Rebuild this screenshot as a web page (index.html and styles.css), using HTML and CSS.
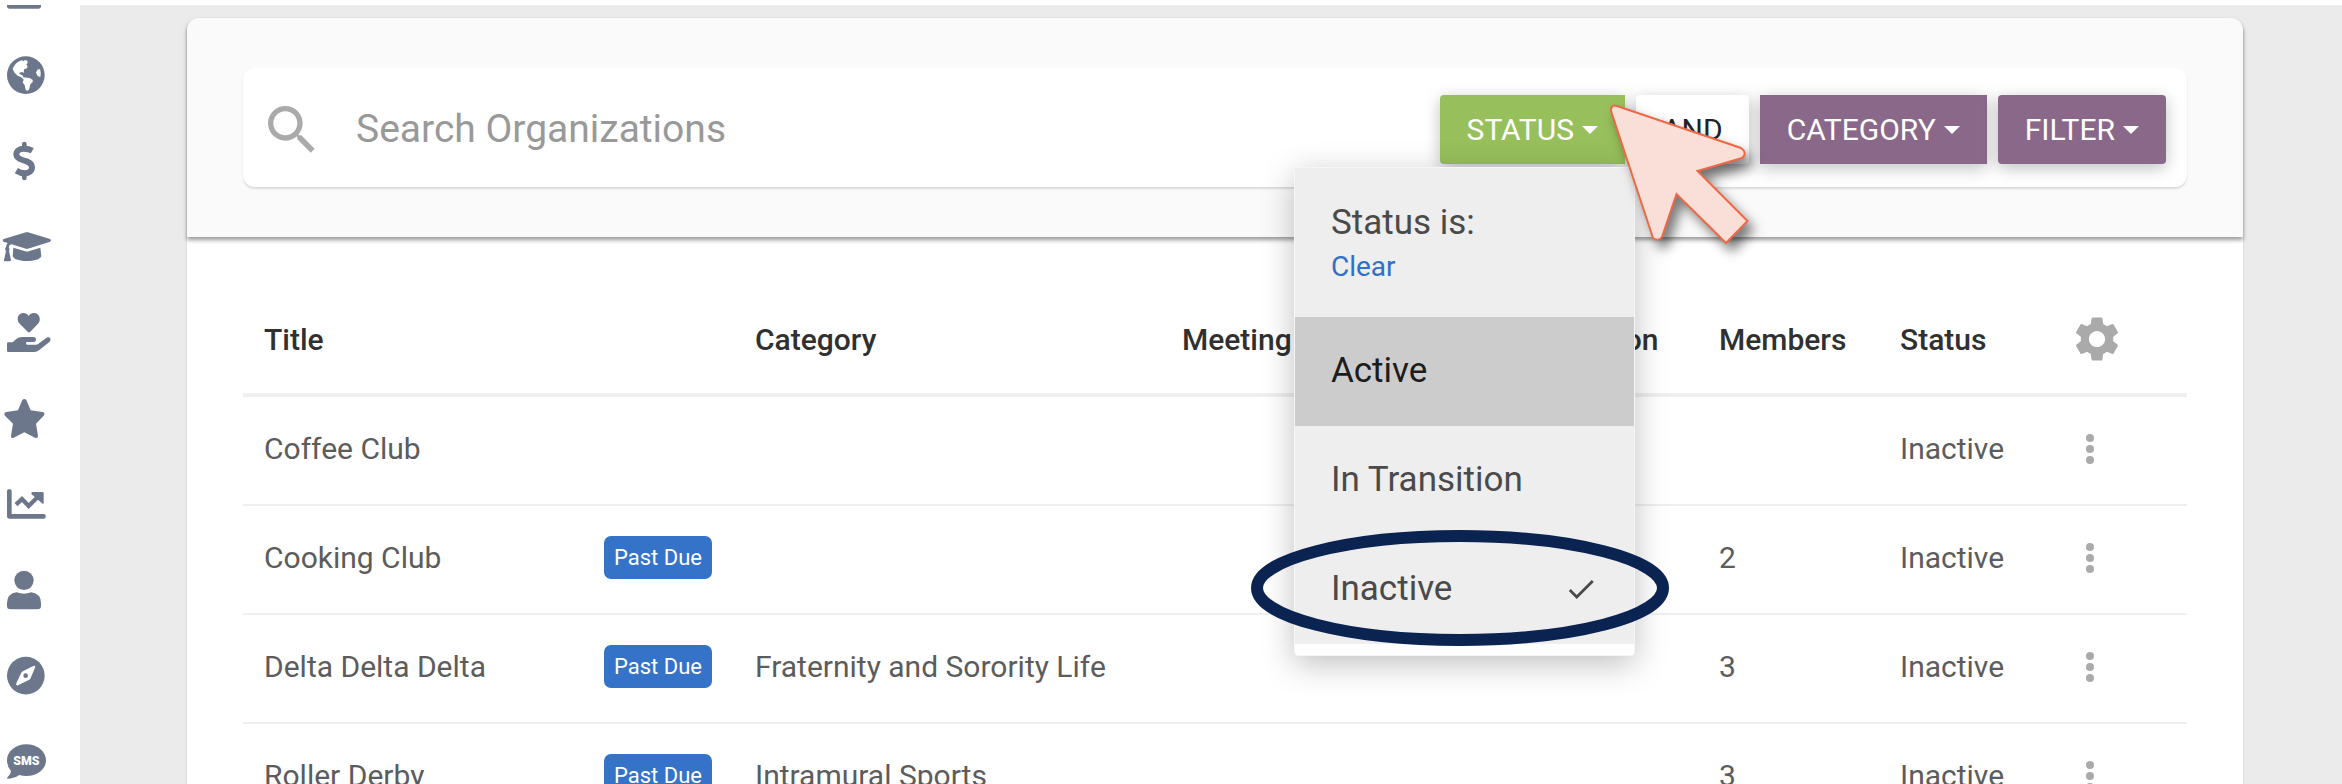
FILE: index.html
```html
<!DOCTYPE html>
<html lang="en">
<head>
<meta charset="utf-8">
<title>Organizations</title>
<link rel="stylesheet" href="styles.css">
</head>
<body>
<div class="page">
  <nav class="sidebar" aria-label="Main">
    <a class="nav-item nav-item-first" href="#" aria-label="Dashboard"><svg class="nav-icon-cut" viewBox="0 15 162 81"><path d="M21 0H123V18Q123 26 115 26H29Q21 26 21 18Z"/></svg></a>
    <a class="nav-item" href="#" aria-label="Network"><svg class="nav-icon" viewBox="0 96 162 258"><circle cx="77.500" cy="225.500" r="56.500"/><path class="cut" d="M38 207C43 194 53 184 66 181L70 184 75 180 82 182 83 189 79 193 83 200 79 206 73 207 71 214 73 218 65 216 57 219 60 223 67 226 70 232 82 233 89 234 98 240 98 246 91 253 87 269 83 272 77 270 74 256 68 247 71 239 64 232 53 227 44 219Z"/><path class="cut" d="M120 207L112 209 108 218 113 228 121 231Q124 219 120 207Z"/></svg></a>
    <a class="nav-item" href="#" aria-label="Finance"><svg class="nav-icon" viewBox="0 354 162 258"><path class="line" d="M73 432V446M73 520V534" stroke-width="14" stroke-linecap="round"/><path class="line" stroke-width="18" d="M97 452C88 447 80 446 71 446C58 446 49 453 49 463C49 473 57 477 67 480L80 484C91 488 96 493 96 502C96 513 87 520 74 520C65 520 57 517 49 512"/></svg></a>
    <a class="nav-item" href="#" aria-label="Academics"><svg class="nav-icon" viewBox="0 612 162 258"><path d="M78 697Q81 696 84 697L150 717Q156 721 150 725L84 746Q81 747 78 746L35 733Q28 734 26 741Q30 747 27 753L33 780Q33 784 29 784H15Q11 784 12 780L18 753Q13 747 18 741Q19 734 23 729L11 725Q5 721 11 717Z"/><path d="M40 743L76 754Q81 755 86 754L121 743L124 769C118 788 44 788 38 769Z"/></svg></a>
    <a class="nav-item" href="#" aria-label="Service"><svg class="nav-icon" viewBox="0 870 162 258"><path d="M86 948C79 937 66 937 57 945C51 952 52 964 59 971L83 995Q87 999 91 995L114 971C121 964 121 952 115 945C106 937 93 937 86 948Z"/><path d="M25 1027H38L48 1018Q56 1011 66 1011H101C111 1012 110 1026 101 1026H81C77 1027 77 1033 81 1034H108Q112 1034 115 1031L140 1013C148 1009 156 1017 149 1025L118 1050Q111 1056 103 1056H25Q21 1056 21 1052V1031Q21 1027 25 1027Z"/></svg></a>
    <a class="nav-item" href="#" aria-label="Favorites"><svg class="nav-icon" viewBox="0 -42 162 258"><path d="M67 30Q73 24 79 30L92 61L127 66Q138 68 131 77L108 101L114 137Q114 146 105 143L73 127L41 143Q32 146 33 137L39 101L15 77Q9 68 19 66L54 61Z"/></svg></a>
    <a class="nav-item" href="#" aria-label="Reports"><svg class="nav-icon" viewBox="0 216 162 258"><path d="M21 303Q21 298 26 298H30Q35 298 35 303V372H132Q137 372 137 377V381Q137 386 132 386H29Q21 386 21 378Z"/><path class="line" stroke-width="13" d="M48 344L66 327L86 348L114 320"/><path d="M98 306H127Q131 306 131 310V338Q131 344 126 340L95 313Q92 307 98 306Z"/></svg></a>
    <a class="nav-item" href="#" aria-label="People"><svg class="nav-icon" viewBox="0 474 162 258"><circle cx="72" cy="571" r="29"/><path d="M50 607Q72 615 94 607Q123 611 123 640V648Q123 658 113 658H31Q21 658 21 648V640Q22 610 50 607Z"/></svg></a>
    <a class="nav-item" href="#" aria-label="Explore"><svg class="nav-icon" viewBox="0 732 162 258"><circle cx="77.500" cy="857" r="56.500"/><path class="cut" d="M100 828Q108 825 105 833L92 864Q90 869 85 871L54 886Q46 888 49 880L63 850Q65 845 70 843Z"/><circle cx="77" cy="857" r="7"/></svg></a>
    <a class="nav-item" href="#" aria-label="Text messages"><svg class="nav-icon" viewBox="0 990 162 258"><path d="M79 1063C112 1063 138 1084 138 1111C138 1138 112 1158 79 1158Q68 1158 58 1155C46 1163 34 1166 23 1166Q20 1164 23 1161Q33 1152 33 1143Q21 1130 21 1111C21 1084 47 1063 79 1063Z"/><text class="sms" x="79" y="1125" text-anchor="middle">SMS</text></svg></a>
  </nav>
  <main class="content">
    <section class="card">
      <header class="card-header">
        <div class="search">
          <svg class="search-icon" viewBox="0 0 24 24"><path d="M15.500 14h-.79l-.28-.27C15.410 12.590 16 11.110 16 9.500 16 5.910 13.090 3 9.500 3S3 5.910 3 9.500 5.910 16 9.500 16c1.610 0 3.090-.59 4.230-1.570l.27.28v.79l5 4.990L20.490 19l-4.990-5zm-6 0C7.010 14 5 11.990 5 9.500S7.010 5 9.500 5 14 7.010 14 9.500 11.990 14 9.500 14z"/></svg>
          <input class="search-input" type="text" placeholder="Search Organizations" aria-label="Search Organizations">
          <div class="filters">
            <div class="dropdown">
              <button class="btn btn-green" type="button" aria-expanded="true">STATUS<span class="caret"></span></button>
              <div class="menu">
                <div class="menu-head">
                  <div>Status is:</div>
                  <a class="clear" href="#">Clear</a>
                </div>
                <button class="menu-item menu-item-active" type="button">Active</button>
                <button class="menu-item" type="button">In Transition</button>
                <button class="menu-item" type="button">Inactive<svg class="check" viewBox="0 0 24 24"><path d="M9 16.200L4.800 12l-1.400 1.400L9 19 21 7l-1.400-1.400z"/></svg></button>
                <svg class="ring" viewBox="0 0 418 116"><ellipse cx="209" cy="58" rx="203" ry="52"/></svg>
              </div>
              <svg class="pointer" viewBox="1605 94 165 165"><path d="M1618 105L1742 147Q1749 152 1743 157L1698.500 170L1748.500 220L1727 242L1677.500 193L1663 236Q1659 241 1654 237L1612 110Q1612 103 1618 105Z"/></svg>
            </div>
            <button class="btn btn-white" type="button">AND</button>
            <button class="btn btn-purple btn-square" type="button">CATEGORY<span class="caret"></span></button>
            <button class="btn btn-purple" type="button">FILTER<span class="caret"></span></button>
          </div>
        </div>
      </header>
      <div class="card-body">
        <table class="table">
          <colgroup>
            <col><col class="col-badge"><col class="col-category"><col class="col-meeting"><col class="col-location"><col class="col-members"><col class="col-status"><col class="col-actions">
          </colgroup>
          <thead>
            <tr><th>Title</th><th></th><th>Category</th><th>Meeting</th><th>Location</th><th>Members</th><th>Status</th>
              <th><button class="icon-btn" type="button" aria-label="Settings"><svg class="gear" viewBox="0 0 24 24"><path d="M19.140 12.940c.04-.3.060-.61.060-.94 0-.32-.02-.64-.07-.94l2.030-1.580c.18-.14.230-.41.120-.61l-1.920-3.320c-.12-.22-.37-.29-.59-.22l-2.390.96c-.5-.38-1.030-.7-1.620-.94l-.36-2.540c-.04-.24-.24-.41-.48-.41h-3.840c-.24 0-.43.170-.47.410l-.36 2.540c-.59.240-1.130.570-1.620.940l-2.390-.96c-.22-.08-.47 0-.59.220L2.740 8.870c-.12.210-.08.470.120.610l2.030 1.580c-.05.300-.09.630-.09.940s.020.640.070.940l-2.030 1.580c-.18.140-.23.410-.12.610l1.920 3.320c.12.220.370.290.590.220l2.390-.96c.5.380 1.030.700 1.620.940l.36 2.540c.05.240.240.410.480.410h3.840c.24 0 .440-.17.470-.41l.36-2.540c.59-.24 1.130-.56 1.620-.94l2.390.96c.22.080.470 0 .590-.22l1.920-3.320c.12-.22.070-.47-.12-.61l-2.010-1.580zM12 15.600c-1.980 0-3.600-1.620-3.600-3.600s1.620-3.600 3.600-3.600 3.600 1.620 3.600 3.600-1.620 3.600-3.600 3.600z"/></svg></button></th></tr>
          </thead>
          <tbody>
            <tr><td>Coffee Club</td><td></td><td></td><td></td><td></td><td></td><td>Inactive</td><td><button class="icon-btn" type="button" aria-label="Actions for Coffee Club"><svg class="dots" viewBox="0 0 40 40"><circle cx="20" cy="9" r="4"/><circle cx="20" cy="20" r="4"/><circle cx="20" cy="31" r="4"/></svg></button></td></tr>
            <tr><td>Cooking Club</td><td><span class="badge">Past Due</span></td><td></td><td></td><td></td><td>2</td><td>Inactive</td><td><button class="icon-btn" type="button" aria-label="Actions for Cooking Club"><svg class="dots" viewBox="0 0 40 40"><circle cx="20" cy="9" r="4"/><circle cx="20" cy="20" r="4"/><circle cx="20" cy="31" r="4"/></svg></button></td></tr>
            <tr><td>Delta Delta Delta</td><td><span class="badge">Past Due</span></td><td>Fraternity and Sorority Life</td><td></td><td></td><td>3</td><td>Inactive</td><td><button class="icon-btn" type="button" aria-label="Actions for Delta Delta Delta"><svg class="dots" viewBox="0 0 40 40"><circle cx="20" cy="9" r="4"/><circle cx="20" cy="20" r="4"/><circle cx="20" cy="31" r="4"/></svg></button></td></tr>
            <tr><td>Roller Derby</td><td><span class="badge">Past Due</span></td><td>Intramural Sports</td><td></td><td></td><td>3</td><td>Inactive</td><td><button class="icon-btn" type="button" aria-label="Actions for Roller Derby"><svg class="dots" viewBox="0 0 40 40"><circle cx="20" cy="9" r="4"/><circle cx="20" cy="20" r="4"/><circle cx="20" cy="31" r="4"/></svg></button></td></tr>
          </tbody>
        </table>
      </div>
    </section>
  </main>
</div>
</body>
</html>
```
FILE: styles.css
```css
*, *::before, *::after { box-sizing: border-box; }
body {
  margin: 0;
  background: #fff;
  color: #5c5c5c;
  font-family: Roboto, "Liberation Sans", sans-serif;
  font-size: 30px;
}
button, input { font-family: inherit; }
.page {
  display: flex;
  height: 100vh;
  padding-top: 5px;
  overflow: hidden;
}

/* Sidebar */
.sidebar {
  display: flex;
  flex: none;
  flex-direction: column;
  width: 80px;
}
.nav-item { display: block; flex: none; height: 86px; }
.nav-item-first { height: 27px; }
.nav-icon, .nav-icon-cut { display: block; width: 54px; height: 86px; fill: #6c778c; }
.nav-icon-cut { height: 27px; }
.nav-icon .cut { fill: #fff; }
.nav-icon .line { fill: none; stroke: #6c778c; }
.sms { fill: #fff; font-size: 37px; font-weight: 900; }

/* Card */
.content {
  flex: 1;
  min-width: 0;
  padding: 13px 99px 0 107px;
  background: #ebebeb;
}
.card {
  min-height: 100%;
  border-radius: 12px 12px 0 0;
  background: #fff;
  box-shadow: 0 1px 2px rgba(0, 0, 0, .2);
}
.card-header {
  position: relative;
  padding: 50px 56px;
  border-radius: 12px 12px 0 0;
  background: #fafafa;
  box-shadow: 0 3px 4px rgba(0, 0, 0, .4);
}
.search {
  display: flex;
  align-items: center;
  padding: 27px 21px 23px 17px;
  border-radius: 12px;
  background: #fff;
  box-shadow: 0 2px 2px rgba(0, 0, 0, .12);
}
.search-icon { flex: none; width: 64px; height: 64px; margin-right: 32px; fill: #aaa; }
.search-input {
  flex: 1;
  min-width: 0;
  padding: 0 0 2px;
  border: 0;
  outline: 0;
  background: transparent;
  color: #444;
  font-size: 39px;
}
.search-input::placeholder { color: #999; opacity: 1; }
.filters { display: flex; gap: 11px; }
.dropdown { position: relative; }
.btn {
  display: flex;
  align-items: center;
  gap: 8px;
  height: 69px;
  padding: 0 27px;
  border: 0;
  border-radius: 4px;
  box-shadow: 0 4px 16px rgba(0, 0, 0, .25);
  color: #fff;
  font-size: 30px;
}
.btn-green { border-radius: 4px 0 0 4px; background: #97c05c; }
.btn-white { padding: 0 26px; background: #fff; color: #222; }
.btn-purple { background: #8a6889; }
.btn-square { border-radius: 0; }
.caret {
  border-top: 8px solid;
  border-right: 8px solid transparent;
  border-left: 8px solid transparent;
}

/* Status menu */
.menu {
  position: absolute;
  z-index: 2;
  top: 72px;
  right: -10px;
  width: 341px;
  padding-bottom: 11px;
  border: 1px solid #f6f6f6;
  border-radius: 4px;
  background: #fff;
  box-shadow: 0 8px 32px rgba(0, 0, 0, .25);
}
.menu-head {
  padding: 33px 36px 28px;
  background: #eee;
  color: #4a4a4a;
  font-size: 35px;
  line-height: 44px;
}
.clear { display: block; color: #2f70c8; font-size: 28px; text-decoration: none; }
.menu-item {
  display: flex;
  align-items: center;
  justify-content: space-between;
  width: 100%;
  height: 109px;
  padding: 0 36px 2px;
  border: 0;
  background: #eee;
  color: #4a4a4a;
  font-size: 35px;
}
.menu-item-active { background: #ccc; color: #1c1c1c; }
.check { width: 34px; height: 34px; fill: #4a4a4a; }
.ring {
  position: absolute;
  bottom: 9px;
  left: -44px;
  width: 418px;
  height: 116px;
  fill: none;
  stroke: #0a2351;
  stroke-width: 12px;
  pointer-events: none;
}
.pointer {
  position: absolute;
  z-index: 3;
  top: 0;
  left: 164px;
  width: 165px;
  height: 165px;
  overflow: visible;
  fill: #fadfd9;
  stroke: #ee6845;
  stroke-width: 2px;
  filter: drop-shadow(6px 8px 6px rgba(0, 0, 0, .5));
  pointer-events: none;
}

/* Table */
.card-body { padding: 48px 56px 0; }
.table { width: 100%; border-collapse: separate; border-spacing: 0; table-layout: fixed; }
.table th, .table td { padding: 0 21px; text-align: left; vertical-align: middle; white-space: nowrap; }
.table th { height: 112px; border-bottom: 4px solid #efefef; color: #303030; font-weight: 500; }
.table td { height: 109px; padding-bottom: 4px; border-bottom: 2px solid #efefef; }
.col-badge { width: 151px; }
.col-category { width: 427px; }
.col-meeting { width: 360px; }
.col-location { width: 177px; }
.col-members { width: 181px; }
.col-status { width: 170px; }
.col-actions { width: 138px; }
.badge {
  display: block;
  width: max-content;
  padding: 0 10px;
  border-radius: 7px;
  background: #3473c8;
  color: #fff;
  font-size: 22px;
  line-height: 43px;
}
.icon-btn { display: block; padding: 0; border: 0; background: none; }
.gear { display: block; width: 54px; height: 54px; fill: #aaa; }
.dots { display: block; width: 40px; height: 40px; fill: #aaa; }
```
